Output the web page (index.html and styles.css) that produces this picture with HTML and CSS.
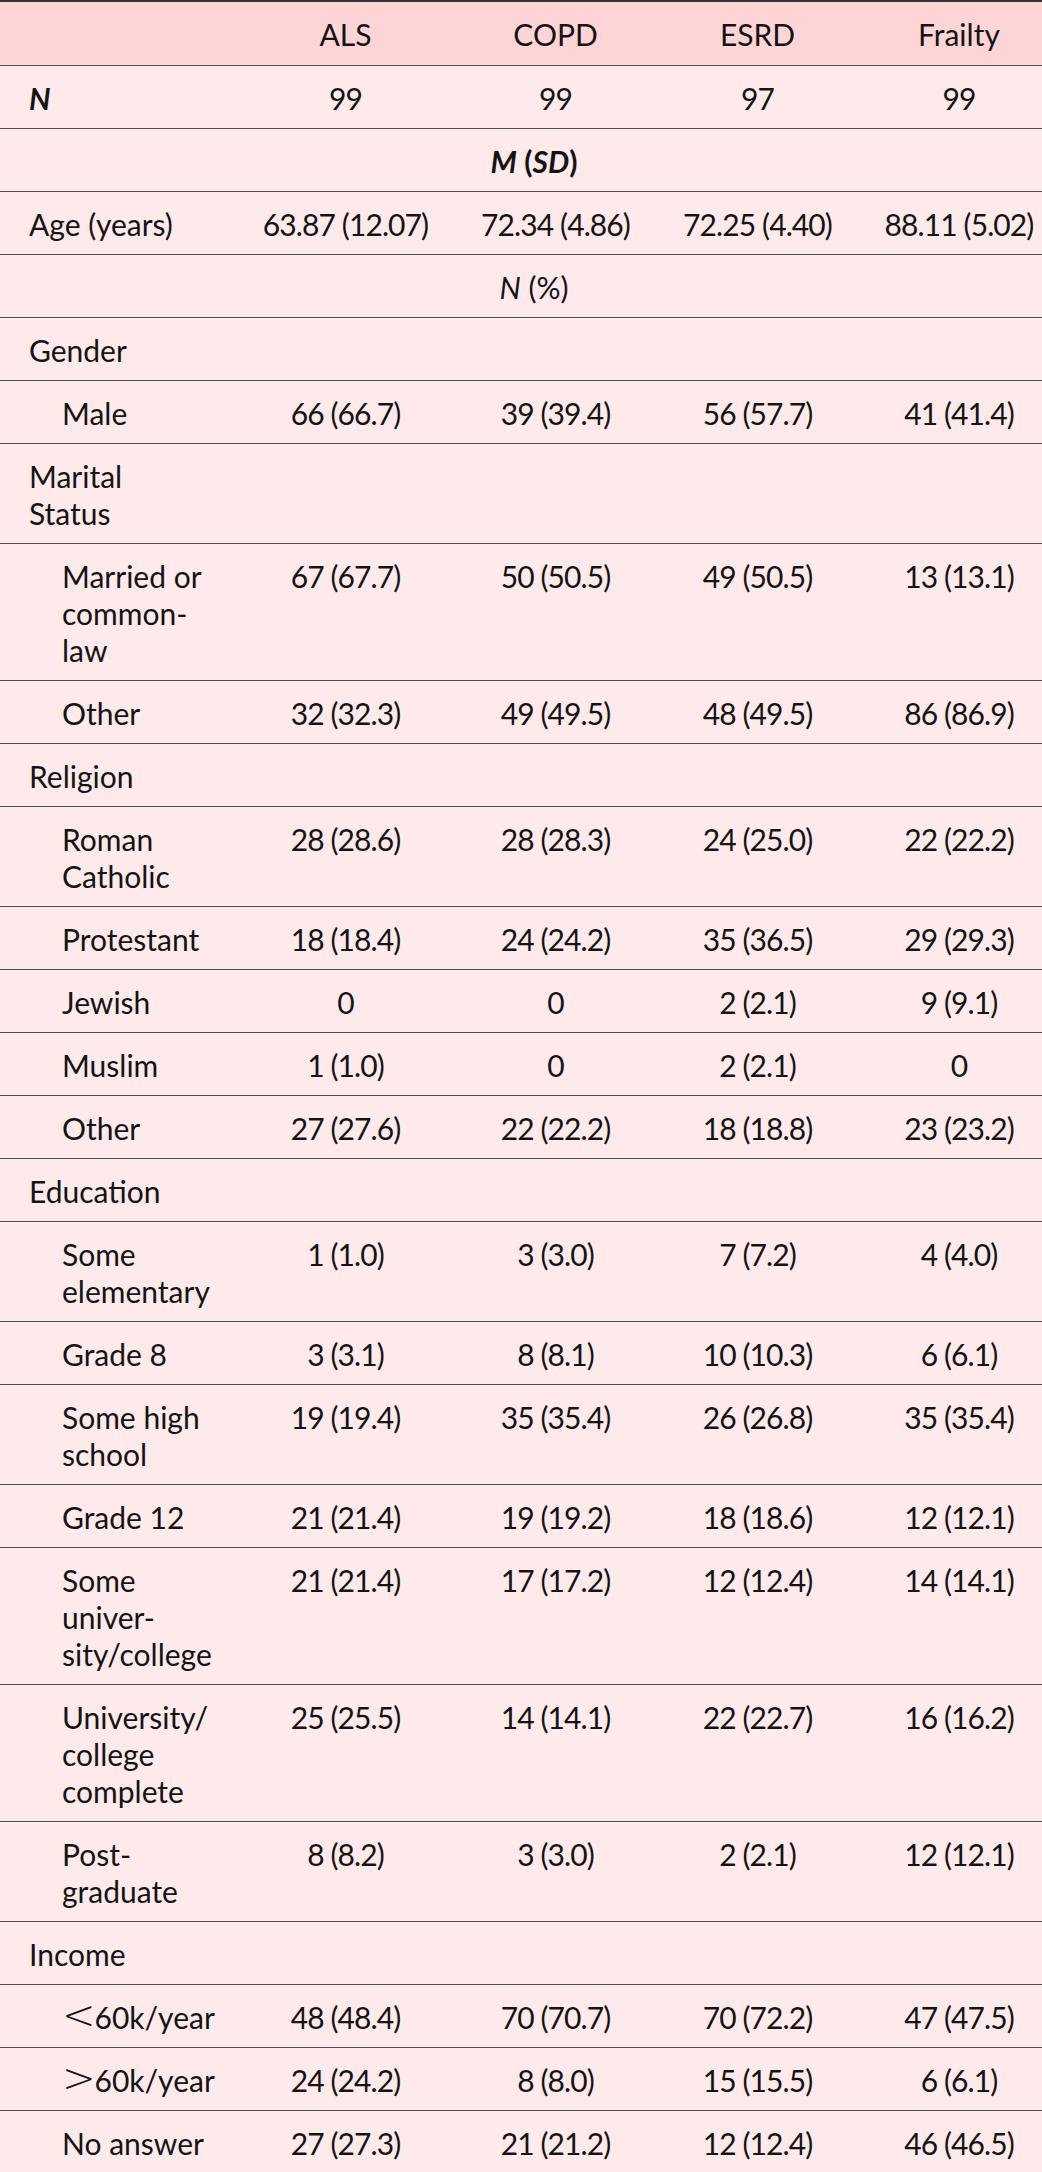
FILE: index.html
```html
<!DOCTYPE html>
<html lang="en">
<head>
<meta charset="utf-8">
<title>Participant characteristics</title>
<link rel="stylesheet" href="styles.css">
</head>
<body>
<table class="tbl">
  <colgroup>
    <col class="c-label">
    <col class="c-als">
    <col class="c-copd">
    <col class="c-esrd">
    <col class="c-frail">
  </colgroup>
  <thead>
    <tr><th></th><th>ALS</th><th>COPD</th><th>ESRD</th><th>Frailty</th></tr>
  </thead>
  <tbody>
    <tr><td class="lab"><b><i>N</i></b></td><td>99</td><td>99</td><td>97</td><td>99</td></tr>
    <tr><td class="span" colspan="5"><b><i>M</i> (<i>SD</i>)</b></td></tr>
    <tr><td class="lab">Age (years)</td><td>63.87 (12.07)</td><td>72.34 (4.86)</td><td>72.25 (4.40)</td><td>88.11 (5.02)</td></tr>
    <tr><td class="span" colspan="5"><i>N</i> (%)</td></tr>
    <tr><td class="lab">Gender</td><td></td><td></td><td></td><td></td></tr>
    <tr><td class="lab sub">Male</td><td>66 (66.7)</td><td>39 (39.4)</td><td>56 (57.7)</td><td>41 (41.4)</td></tr>
    <tr><td class="lab">Marital<br>Status</td><td></td><td></td><td></td><td></td></tr>
    <tr><td class="lab sub">Married or<br>common-<br>law</td><td>67 (67.7)</td><td>50 (50.5)</td><td>49 (50.5)</td><td>13 (13.1)</td></tr>
    <tr><td class="lab sub">Other</td><td>32 (32.3)</td><td>49 (49.5)</td><td>48 (49.5)</td><td>86 (86.9)</td></tr>
    <tr><td class="lab">Religion</td><td></td><td></td><td></td><td></td></tr>
    <tr><td class="lab sub">Roman<br>Catholic</td><td>28 (28.6)</td><td>28 (28.3)</td><td>24 (25.0)</td><td>22 (22.2)</td></tr>
    <tr><td class="lab sub">Protestant</td><td>18 (18.4)</td><td>24 (24.2)</td><td>35 (36.5)</td><td>29 (29.3)</td></tr>
    <tr><td class="lab sub">Jewish</td><td>0</td><td>0</td><td>2 (2.1)</td><td>9 (9.1)</td></tr>
    <tr><td class="lab sub">Muslim</td><td>1 (1.0)</td><td>0</td><td>2 (2.1)</td><td>0</td></tr>
    <tr><td class="lab sub">Other</td><td>27 (27.6)</td><td>22 (22.2)</td><td>18 (18.8)</td><td>23 (23.2)</td></tr>
    <tr><td class="lab">Education</td><td></td><td></td><td></td><td></td></tr>
    <tr><td class="lab sub">Some<br>elementary</td><td>1 (1.0)</td><td>3 (3.0)</td><td>7 (7.2)</td><td>4 (4.0)</td></tr>
    <tr><td class="lab sub">Grade 8</td><td>3 (3.1)</td><td>8 (8.1)</td><td>10 (10.3)</td><td>6 (6.1)</td></tr>
    <tr><td class="lab sub">Some high<br>school</td><td>19 (19.4)</td><td>35 (35.4)</td><td>26 (26.8)</td><td>35 (35.4)</td></tr>
    <tr><td class="lab sub">Grade 12</td><td>21 (21.4)</td><td>19 (19.2)</td><td>18 (18.6)</td><td>12 (12.1)</td></tr>
    <tr><td class="lab sub">Some<br>univer-<br>sity/college</td><td>21 (21.4)</td><td>17 (17.2)</td><td>12 (12.4)</td><td>14 (14.1)</td></tr>
    <tr><td class="lab sub">University/<br>college<br>complete</td><td>25 (25.5)</td><td>14 (14.1)</td><td>22 (22.7)</td><td>16 (16.2)</td></tr>
    <tr><td class="lab sub">Post-<br>graduate</td><td>8 (8.2)</td><td>3 (3.0)</td><td>2 (2.1)</td><td>12 (12.1)</td></tr>
    <tr><td class="lab">Income</td><td></td><td></td><td></td><td></td></tr>
    <tr><td class="lab sub"><span class="rel">&lt;</span>60k/year</td><td>48 (48.4)</td><td>70 (70.7)</td><td>70 (72.2)</td><td>47 (47.5)</td></tr>
    <tr><td class="lab sub"><span class="rel">&gt;</span>60k/year</td><td>24 (24.2)</td><td>8 (8.0)</td><td>15 (15.5)</td><td>6 (6.1)</td></tr>
    <tr><td class="lab sub">No answer</td><td>27 (27.3)</td><td>21 (21.2)</td><td>12 (12.4)</td><td>46 (46.5)</td></tr>
  </tbody>
</table>
</body>
</html>
```

FILE: styles.css
```css
html, body {
  margin: 0;
  padding: 0;
  background: #feeaeb;
}

body {
  font-family: Lato, "Noto Sans", sans-serif;
  font-size: 30px;
  line-height: 37px;
  color: #141414;
}

.tbl {
  width: 1042px;
  table-layout: fixed;
  border-collapse: collapse;
  background: #feeaeb;
  border-top: 2px solid #333;
  border-bottom: 2px solid #333;
}

.c-label { width: 219px; }
.c-als { width: 227px; }
.c-copd { width: 193px; }
.c-esrd { width: 211px; }
.c-frail { width: 192px; }

.tbl th,
.tbl td {
  padding: 14px 3px 11px 29px;
  text-align: center;
  vertical-align: top;
  border-bottom: 1px solid #4d4d4d;
  white-space: nowrap;
}

.tbl tbody td {
  letter-spacing: -0.9px;
}

.tbl thead th {
  background: #fdd5d6;
  font-weight: normal;
  padding-bottom: 12px;
}

.tbl tbody tr:last-child td {
  border-bottom: 2px solid #333;
}

.tbl td.lab,
.tbl td.span {
  letter-spacing: 0;
}

.tbl td.lab {
  text-align: left;
}

.tbl td.sub {
  padding-left: 62px;
}

.rel {
  font-family: "DejaVu Sans", sans-serif;
  font-weight: 200;
  font-size: 40px;
  line-height: 0;
  margin-right: -1px;
}
```
